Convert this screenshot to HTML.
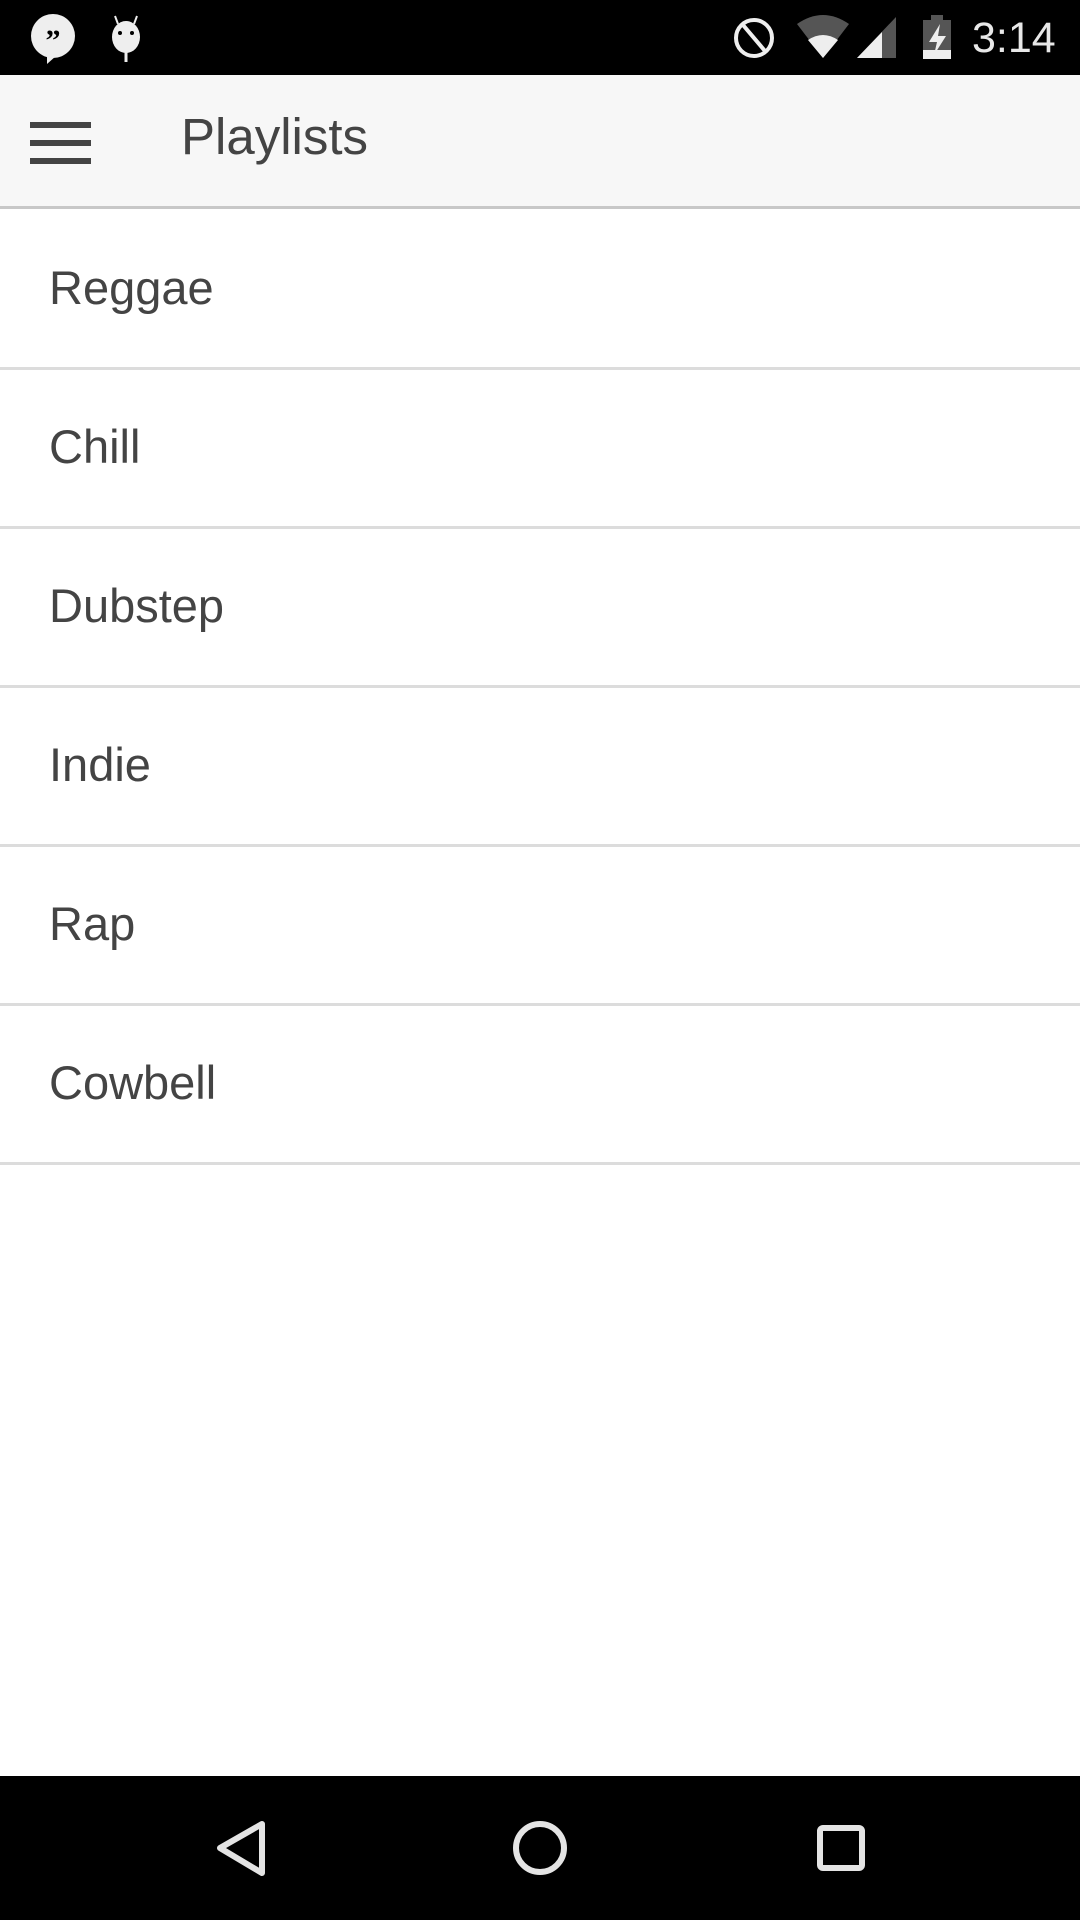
<!DOCTYPE html>
<html><head><meta charset="utf-8"><style>
*{margin:0;padding:0;box-sizing:border-box}
body{width:1080px;height:1920px;background:#fff;position:relative;overflow:hidden;font-family:"Liberation Sans",Roboto,sans-serif}
.sb{position:absolute;left:0;top:0;width:1080px;height:75px;background:#000}
.tb{position:absolute;left:0;top:75px;width:1080px;height:134px;background:#f7f7f7;border-bottom:3px solid #c8c8c8}
.title{position:absolute;left:181px;top:105px;font-size:51px;color:#444;line-height:64px}
.hb{position:absolute;left:30px;width:61px;height:6px;background:#444}
.item{position:absolute;left:0;width:1080px;border-bottom:3px solid #dcdcdc;font-size:47px;color:#444;padding-left:49px;padding-bottom:4px;display:flex;align-items:center}
.nav{position:absolute;left:0;top:1776px;width:1080px;height:144px;background:#000}
.time{position:absolute;left:972px;top:14px;font-size:43px;color:#e8e8e8}
</style></head><body>
<div class="sb">
<svg width="1080" height="75" style="position:absolute;left:0;top:0">
<circle cx="53" cy="36" r="22" fill="#eee"/><path d="M47 55 L47 64 L56 56Z" fill="#eee"/>
<text x="53" y="50" font-size="30" font-weight="bold" fill="#000" text-anchor="middle" font-family="Liberation Serif">”</text>
<ellipse cx="126" cy="37" rx="14" ry="16" fill="#eee"/><line x1="126" y1="50" x2="126" y2="62" stroke="#eee" stroke-width="3"/>
<line x1="115" y1="16" x2="118" y2="24" stroke="#eee" stroke-width="2"/><line x1="137" y1="16" x2="134" y2="24" stroke="#eee" stroke-width="2"/>
<circle cx="120" cy="33" r="2" fill="#000"/><circle cx="132" cy="33" r="2" fill="#000"/>
<circle cx="754" cy="38" r="18" fill="none" stroke="#eee" stroke-width="4"/><line x1="743" y1="25" x2="765" y2="51" stroke="#eee" stroke-width="4"/>
<path d="M797 24 Q823 6 849 24 L823 58Z" fill="#555"/><path d="M808 40 Q823 30 838 40 L823 58Z" fill="#eee"/>
<path d="M857 58 L896 17 L896 58Z" fill="#555"/><path d="M857 58 L882 32 L882 58Z" fill="#eee"/>
<rect x="923" y="20" width="28" height="39" fill="#555"/><rect x="931" y="15" width="12" height="6" fill="#555"/><rect x="923" y="50" width="28" height="9" fill="#eee"/>
<path d="M940 24 L929 42 L937 42 L934 55 L946 36 L938 36Z" fill="#eee"/>
</svg>
<div class="time">3:14</div>
</div>
<div class="tb">
<div class="hb" style="top:47px"></div><div class="hb" style="top:65px"></div><div class="hb" style="top:83px"></div>
</div>
<div class="title">Playlists</div>
<div class="item" style="top:212px;height:158px">Reggae</div>
<div class="item" style="top:370px;height:159px">Chill</div>
<div class="item" style="top:529px;height:159px">Dubstep</div>
<div class="item" style="top:688px;height:159px">Indie</div>
<div class="item" style="top:847px;height:159px">Rap</div>
<div class="item" style="top:1006px;height:159px">Cowbell</div>
<div class="nav" style="top:1776px">
<svg width="1080" height="144">
<path d="M262 48 L262 97 L220 72Z" fill="none" stroke="#e4e4e4" stroke-width="6" stroke-linejoin="round"/>
<circle cx="540" cy="72" r="24" fill="none" stroke="#e4e4e4" stroke-width="6"/>
<rect x="820" y="52" width="42" height="40" rx="3" fill="none" stroke="#e4e4e4" stroke-width="6"/>
</svg>
</div>
</body></html>
